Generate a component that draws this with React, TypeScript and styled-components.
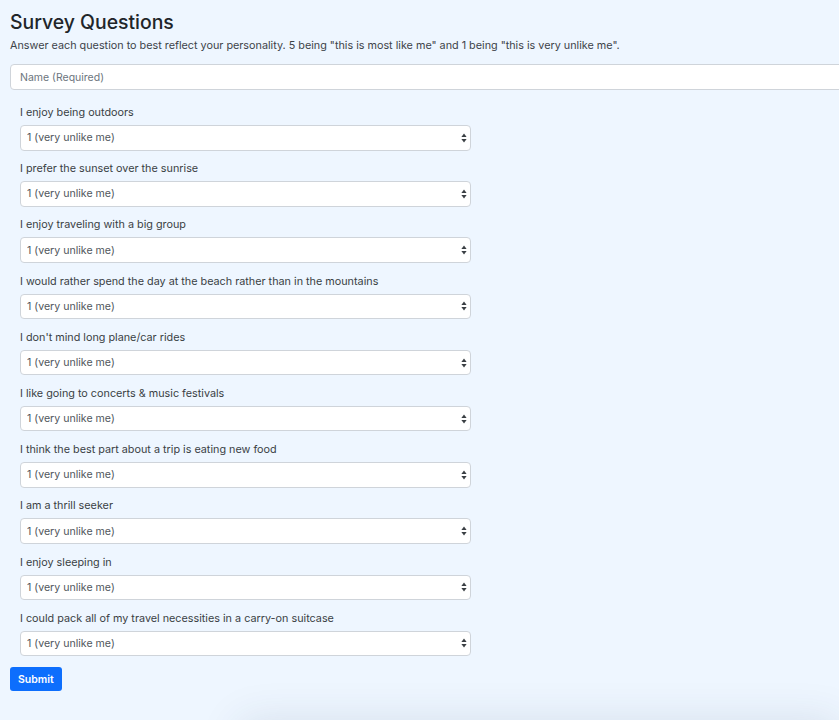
import React from 'react';
import styled, { createGlobalStyle } from 'styled-components';

const GlobalStyle = createGlobalStyle`
  html, body {
    margin: 0;
    padding: 0;
    background: #eef6ff;
    overflow: hidden;
  }
  body {
    font-family: Inter, 'Liberation Sans', sans-serif;
    color: #212529;
  }
`;

const Page = styled.div`
  padding: 10px 0 0 10px;
  height: 720px;
  box-sizing: border-box;
  overflow: hidden;
`;

const Title = styled.h1`
  margin: 0;
  font-size: 19.4px;
  line-height: 24px;
  font-weight: 500;
  color: #212529;
`;

const Intro = styled.p`
  margin: 5px 0 0;
  font-size: 10.8px;
  line-height: 14px;
  color: #3d4349;
`;

const NameInput = styled.input`
  display: block;
  box-sizing: border-box;
  width: calc(100% + 20px);
  height: 26px;
  margin-top: 11px;
  padding: 0 9px;
  border: 1px solid #cfd4da;
  border-radius: 4px;
  background: #fff;
  font-family: inherit;
  font-size: 10.5px;
  color: #495057;

  &::placeholder {
    color: #6c757d;
  }
`;

const Questions = styled.div`
  padding: 15px 0 0 10px;
`;

const Question = styled.div`
  margin-bottom: 10.7px;
`;

const Label = styled.label`
  display: block;
  font-size: 10.8px;
  line-height: 15px;
  color: #3a3f44;
  margin-bottom: 5px;
`;

const SelectWrap = styled.div`
  position: relative;
  width: 451px;
`;

const Select = styled.select`
  display: block;
  box-sizing: border-box;
  width: 100%;
  height: 25.5px;
  padding: 0 20px 0 6px;
  border: 1px solid #cfd4da;
  border-radius: 4px;
  background: #fff;
  appearance: none;
  font-family: inherit;
  font-size: 10.6px;
  color: #50565c;
`;

const Caret = styled.svg`
  position: absolute;
  right: 4px;
  top: 50%;
  transform: translateY(-50%);
  pointer-events: none;
`;

const SubmitButton = styled.button`
  height: 24px;
  padding: 0 8px;
  border: none;
  border-radius: 3px;
  background: #0d6efd;
  color: #fff;
  font-family: inherit;
  font-size: 10.5px;
  font-weight: 600;
`;

const FooterCard = styled.div`
  margin: 30px 0 0 230px;
  height: 200px;
  background: #eef6ff;
  box-shadow: 0 0 40px rgba(40, 60, 90, 0.12);
`;

const questions = [
  'I enjoy being outdoors',
  'I prefer the sunset over the sunrise',
  'I enjoy traveling with a big group',
  'I would rather spend the day at the beach rather than in the mountains',
  "I don't mind long plane/car rides",
  'I like going to concerts & music festivals',
  'I think the best part about a trip is eating new food',
  'I am a thrill seeker',
  'I enjoy sleeping in',
  'I could pack all of my travel necessities in a carry-on suitcase',
];

const options = [
  '1 (very unlike me)',
  '2',
  '3',
  '4',
  '5 (most like me)',
];

const App = (): React.JSX.Element => (
  <>
    <GlobalStyle />
    <Page>
      <Title>Survey Questions</Title>
      <Intro>
        Answer each question to best reflect your personality. 5 being "this is most like me" and 1
        being "this is very unlike me".
      </Intro>
      <NameInput placeholder="Name (Required)" />
      <Questions>
        {questions.map((q) => (
          <Question key={q}>
            <Label>{q}</Label>
            <SelectWrap>
              <Select defaultValue={options[0]}>
                {options.map((o) => (
                  <option key={o}>{o}</option>
                ))}
              </Select>
              <Caret width="6" height="10" viewBox="0 0 6 10">
                <path d="M3 0.5 L5.6 4 H0.4 Z" fill="#3a3f44" />
                <path d="M3 9.5 L5.6 6 H0.4 Z" fill="#3a3f44" />
              </Caret>
            </SelectWrap>
          </Question>
        ))}
      </Questions>
      <SubmitButton>Submit</SubmitButton>
      <FooterCard />
    </Page>
  </>
);

export default App;
